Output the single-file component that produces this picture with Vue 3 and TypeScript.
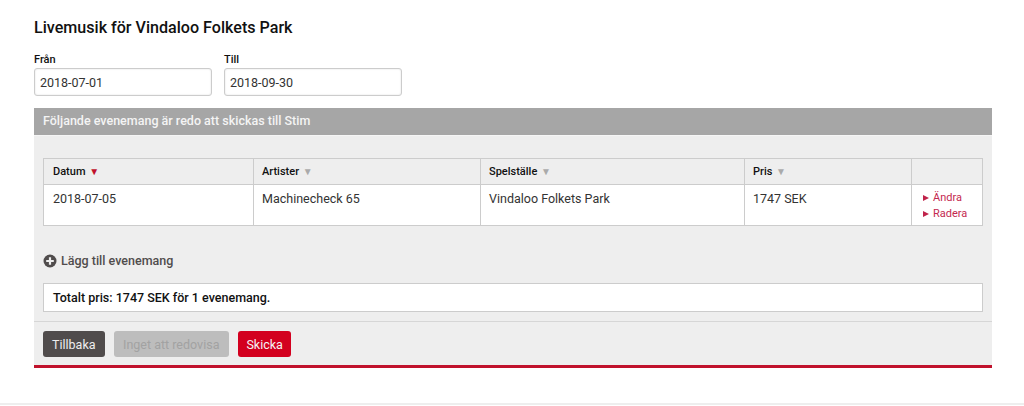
<script setup lang="ts">
interface Column {
  label: string;
  width: number;
  active?: boolean;
}

const columns: Column[] = [
  { label: 'Datum', width: 210, active: true },
  { label: 'Artister', width: 227 },
  { label: 'Spelställe', width: 264 },
  { label: 'Pris', width: 167 },
  { label: '', width: 71 }
];

const row = ['2018-07-05', 'Machinecheck 65', 'Vindaloo Folkets Park', '1747 SEK'];
</script>

<template>
  <div class="page">
    <h1 class="title">Livemusik för Vindaloo Folkets Park</h1>

    <div class="dates">
      <label class="field">
        <span class="field-label">Från</span>
        <input class="field-input" type="text" value="2018-07-01" />
      </label>
      <label class="field">
        <span class="field-label">Till</span>
        <input class="field-input" type="text" value="2018-09-30" />
      </label>
    </div>

    <section class="panel">
      <h2 class="panel-head">Följande evenemang är redo att skickas till Stim</h2>

      <div class="panel-body">
        <table class="events">
          <colgroup>
            <col v-for="col in columns" :key="col.label" :style="{ width: col.width + 'px' }" />
          </colgroup>
          <thead>
            <tr>
              <th v-for="col in columns" :key="col.label">
                <template v-if="col.label">
                  {{ col.label }}
                  <span class="sort" :class="{ active: col.active }">▼</span>
                </template>
              </th>
            </tr>
          </thead>
          <tbody>
            <tr>
              <td v-for="cell in row" :key="cell">{{ cell }}</td>
              <td class="actions">
                <a class="action">Ändra</a>
                <a class="action">Radera</a>
              </td>
            </tr>
          </tbody>
        </table>

        <a class="add">
          <svg class="add-icon" viewBox="0 0 14 14" width="14" height="14">
            <circle cx="7" cy="7" r="6.5" fill="#504c4c" />
            <path d="M3.2 7h7.6M7 3.2v7.6" stroke="#eee" stroke-width="2.2" />
          </svg>
          Lägg till evenemang
        </a>

        <div class="total">Totalt pris: 1747 SEK för 1 evenemang.</div>
      </div>

      <div class="panel-foot">
        <button class="btn btn-dark" type="button">Tillbaka</button>
        <button class="btn btn-off" type="button">Inget att redovisa</button>
        <button class="btn btn-red" type="button">Skicka</button>
      </div>
    </section>

    <div class="page-end"></div>
  </div>
</template>

<style scoped>
.page {
  height: 406px;
  box-sizing: border-box;
  padding: 18px 32px 0 34px;
  font-family: Roboto, "Liberation Sans", sans-serif;
  font-size: 12.5px;
  color: #333;
  position: relative;
}

.title {
  margin: 0;
  font-size: 16.1px;
  line-height: 19px;
  font-weight: 500;
  color: #111;
}

.dates {
  display: flex;
  gap: 12px;
  margin-top: 16px;
}

.field {
  display: flex;
  flex-direction: column;
  gap: 2px;
  width: 178px;
}

.field-label {
  font-size: 11px;
  line-height: 13px;
  font-weight: 500;
  color: #111;
}

.field-input {
  box-sizing: border-box;
  width: 100%;
  height: 28px;
  margin: 0;
  padding: 0 5px;
  border: 1px solid #ccc;
  border-radius: 3px;
  box-shadow: inset 0 0 2px #ddd;
  font: 12.5px Roboto, "Liberation Sans", sans-serif;
  color: #333;
  background: #fff;
}

.panel {
  margin-top: 12px;
  background: #eee;
  border-bottom: 3px solid #c0122c;
}

.panel-head {
  margin: 0;
  height: 27px;
  padding-left: 9px;
  background: #a6a6a6;
  border-bottom: 1px solid #f5f5f5;
  font-size: 12.5px;
  line-height: 26px;
  font-weight: 500;
  color: #f4f4f4;
}

.panel-body {
  padding: 22px 9px 9px;
  border-bottom: 1px solid #d6d6d6;
}

.events {
  width: 939px;
  table-layout: fixed;
  border-collapse: collapse;
  background: #fff;
}

.events th,
.events td {
  border: 1px solid #ccc;
  padding: 0 8px;
  text-align: left;
  vertical-align: top;
}

.events th:first-child,
.events td:first-child {
  padding-left: 9px;
}

.events th {
  height: 25px;
  background: #eee;
  font-size: 11px;
  line-height: 25px;
  font-weight: 500;
  color: #111;
}

.events td {
  height: 41px;
  padding-top: 5px;
  box-sizing: border-box;
  font-size: 12.5px;
  line-height: 17px;
}

.sort {
  margin-left: 1px;
  font-size: 10px;
  color: #aaa;
}

.sort.active {
  color: #c0122c;
}

.events .actions {
  padding-top: 5px;
}

.action {
  display: block;
  position: relative;
  padding-left: 13px;
  font-size: 11px;
  line-height: 16px;
  color: #c4284f;
}

.action::before {
  content: "";
  position: absolute;
  left: 3px;
  top: 5px;
  border-style: solid;
  border-width: 3px 0 3px 6px;
  border-color: transparent transparent transparent #c0234a;
}

.add {
  display: flex;
  align-items: center;
  gap: 4px;
  margin-top: 26px;
  font-size: 12.5px;
  line-height: 17px;
  font-weight: 500;
  color: #504c4c;
}

.total {
  box-sizing: border-box;
  height: 29px;
  margin-top: 14px;
  padding-left: 9px;
  border: 1px solid #ccc;
  background: #fff;
  font-size: 12.5px;
  line-height: 27px;
  font-weight: 500;
  color: #111;
}

.panel-foot {
  display: flex;
  gap: 9px;
  padding: 9px 9px 8px;
}

.btn {
  height: 26px;
  margin: 0;
  padding: 0 9.5px;
  border: 0;
  border-radius: 3px;
  font: 12.5px Roboto, "Liberation Sans", sans-serif;
}

.btn-dark {
  padding: 0 9px;
  background: #504c4c;
  color: #eee;
}

.btn-off {
  background: #bdbdbd;
  color: #a2a2a2;
}

.btn-red {
  padding: 0 8.5px;
  background: #d3001f;
  color: #f4f4f4;
}

.page-end {
  position: absolute;
  left: 0;
  right: 0;
  bottom: 1px;
  height: 2px;
  background: #eee;
}
</style>

<style>
html, body {
  margin: 0;
  background: #fff;
}
</style>
